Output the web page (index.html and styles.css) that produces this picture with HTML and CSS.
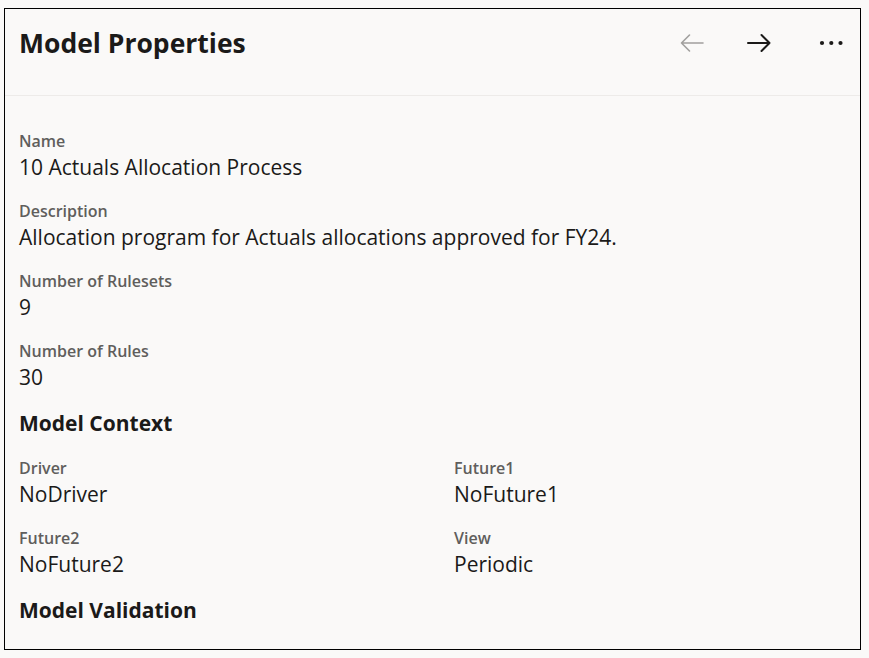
FILE: index.html
```html
<!DOCTYPE html>
<html>
<head>
<meta charset="utf-8">
<link rel="stylesheet" href="styles.css">
</head>
<body>
<div class="panel">
  <header class="head">
    <h1 class="title">Model Properties</h1>
    <div class="actions">
      <button class="icon-btn muted" aria-label="Previous">
        <svg width="24" height="24" viewBox="0 0 24 24" fill="none" stroke="currentColor" stroke-width="1.6" stroke-linecap="round" stroke-linejoin="round"><path d="M23 12H1.5M9.5 4 1.5 12l8 8"/></svg>
      </button>
      <button class="icon-btn" aria-label="Next">
        <svg width="24" height="24" viewBox="0 0 24 24" fill="none" stroke="currentColor" stroke-width="2" stroke-linecap="round" stroke-linejoin="round"><path d="M1 12h21.5M14.5 4l8 8-8 8"/></svg>
      </button>
      <button class="icon-btn more" aria-label="More">
        <svg width="24" height="24" viewBox="0 0 24 24" fill="currentColor"><circle cx="3" cy="12" r="2.1"/><circle cx="12.3" cy="12" r="2.1"/><circle cx="21.5" cy="12" r="2.1"/></svg>
      </button>
    </div>
  </header>
  <div class="body">
    <div class="field"><div class="label">Name</div><div class="value">10 Actuals Allocation Process</div></div>
    <div class="field"><div class="label">Description</div><div class="value">Allocation program for Actuals allocations approved for FY24.</div></div>
    <div class="field"><div class="label">Number of Rulesets</div><div class="value">9</div></div>
    <div class="field"><div class="label">Number of Rules</div><div class="value">30</div></div>
    <h2 class="section">Model Context</h2>
    <div class="grid">
      <div class="field"><div class="label">Driver</div><div class="value">NoDriver</div></div>
      <div class="field"><div class="label">Future1</div><div class="value">NoFuture1</div></div>
      <div class="field"><div class="label">Future2</div><div class="value">NoFuture2</div></div>
      <div class="field"><div class="label">View</div><div class="value">Periodic</div></div>
    </div>
    <h2 class="section">Model Validation</h2>
  </div>
</div>
</body>
</html>
```
FILE: styles.css
```css
html, body {
  margin: 0;
  background: #faf9f8;
}
body {
  padding: 8px 8px 0 4px;
  font-family: "Open Sans", "Noto Sans", sans-serif;
  color: #1b1a19;
}
.panel {
  box-sizing: border-box;
  width: 857px;
  height: 642px;
  border: 1px solid #000;
  background: #faf9f8;
  overflow: hidden;
}
.head {
  display: flex;
  align-items: center;
  justify-content: space-between;
  box-sizing: border-box;
  height: 87px;
  padding: 0 17px 18px 14px;
  border-bottom: 1px solid #edebe9;
}
.title {
  margin: 0;
  font-size: 26.5px;
  line-height: 34px;
  font-weight: 700;
}
.actions {
  display: flex;
  gap: 43px;
  align-items: center;
}
.icon-btn {
  border: 0;
  background: transparent;
  padding: 0;
  width: 24px;
  height: 24px;
  color: #1b1a19;
  display: flex;
}
.icon-btn.muted {
  color: #a19f9d;
}
.icon-btn.more {
  margin-left: 5px;
}
.body {
  padding: 35px 14px 0 14px;
}
.field {
  margin-bottom: 19px;
}
.label {
  font-size: 16px;
  line-height: 21px;
  font-weight: 600;
  color: #605e5c;
}
.value {
  font-size: 21px;
  line-height: 30px;
  color: #1b1a19;
}
.section {
  margin: -2px 0 21px;
  font-size: 21px;
  line-height: 28px;
  font-weight: 700;
}
.grid {
  display: grid;
  grid-template-columns: 435px 1fr;
}
```
